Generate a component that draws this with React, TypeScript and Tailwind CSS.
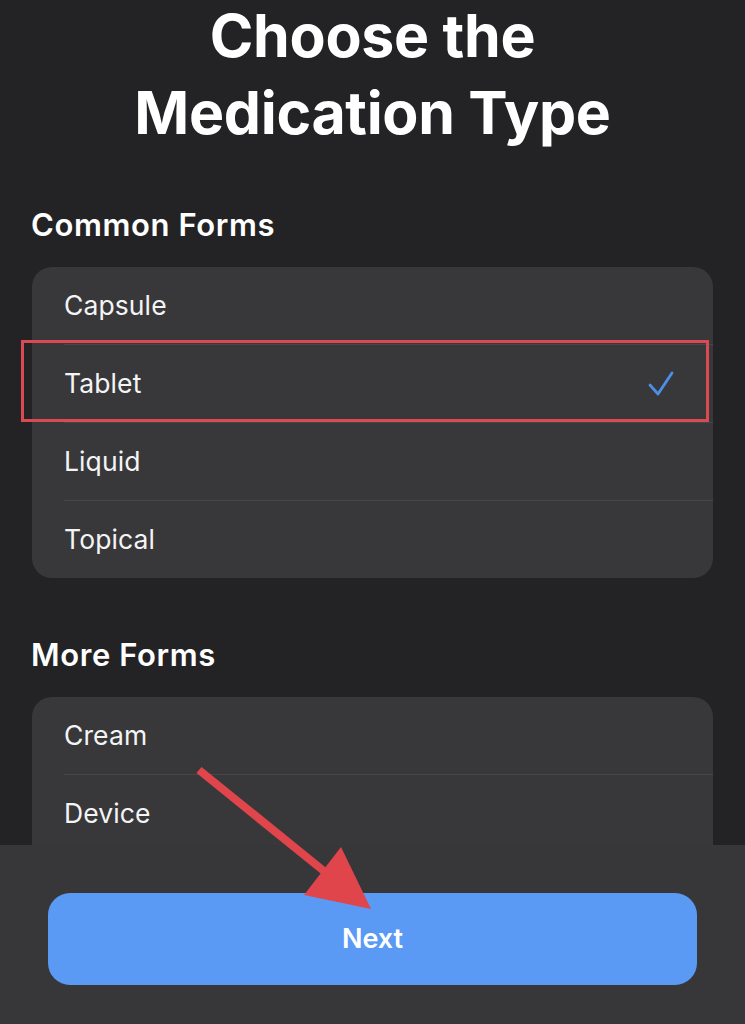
import React from 'react';

const font = { fontFamily: 'Inter, "Noto Sans", sans-serif' };

function Row({ label, checked, divider }: { label: string; checked?: boolean; divider?: boolean }) {
  return (
    <div>
      <div className="flex items-center justify-between h-[77px] pl-[32px] pr-[38px]">
        <span className="text-[26.5px] text-[#f4f4f5] tracking-[0.1px]">{label}</span>
        {checked && (
          <svg width="28" height="28" viewBox="0 0 28 28" fill="none">
            <path d="M3 15 L11 24 L25 3" stroke="#4c8fe6" strokeWidth="2.8" strokeLinecap="round" strokeLinejoin="round" />
          </svg>
        )}
      </div>
      {divider && <div className="ml-[32px] h-px bg-[#47474a]" />}
    </div>
  );
}

export default function App() {
  return (
    <div className="relative h-[1024px] w-[745px] overflow-hidden bg-[#232325]" style={font}>
      {/* Title */}
      <h1 className="-mt-[3px] text-center text-[59px] leading-[77px] font-bold text-white tracking-[-0.3px]">
        Choose the
        <br />
        Medication Type
      </h1>

      {/* Common Forms */}
      <h2 className="mt-[56px] ml-[31px] text-[31px] leading-[36px] font-semibold text-white tracking-[0.6px]">
        Common Forms
      </h2>
      <div className="relative mt-[24px] mx-[32px] rounded-[20px] bg-[#38383b]">
        <Row label="Capsule" divider />
        <Row label="Tablet" checked divider />
        <Row label="Liquid" divider />
        <Row label="Topical" />
        {/* highlight box */}
        <div className="absolute left-[-11px] right-[4px] top-[73px] h-[82px] border-[3px] border-[#d94a52]" />
      </div>

      {/* More Forms */}
      <h2 className="mt-[59px] ml-[31px] text-[31px] leading-[36px] font-semibold text-white tracking-[0.6px]">
        More Forms
      </h2>
      <div className="mt-[24px] mx-[32px] rounded-[20px] bg-[#38383b]">
        <Row label="Cream" divider />
        <Row label="Device" divider />
        <Row label="Drops" />
      </div>

      {/* Bottom bar */}
      <div className="absolute left-0 right-0 bottom-0 h-[179px] bg-[#373739] px-[48px] pt-[48px]">
        <button className="w-full h-[92px] rounded-[22px] bg-[#5a9af4] text-white text-[27px] font-semibold">
          Next
        </button>
      </div>

      {/* Red arrow */}
      <svg className="absolute left-0 top-0" width="745" height="1024" viewBox="0 0 745 1024">
        <line x1="199" y1="770" x2="330" y2="876" stroke="#e0454c" strokeWidth="8" strokeLinecap="butt" />
        <polygon points="304,895 341,847 371,909" fill="#e0454c" />
      </svg>
    </div>
  );
}
